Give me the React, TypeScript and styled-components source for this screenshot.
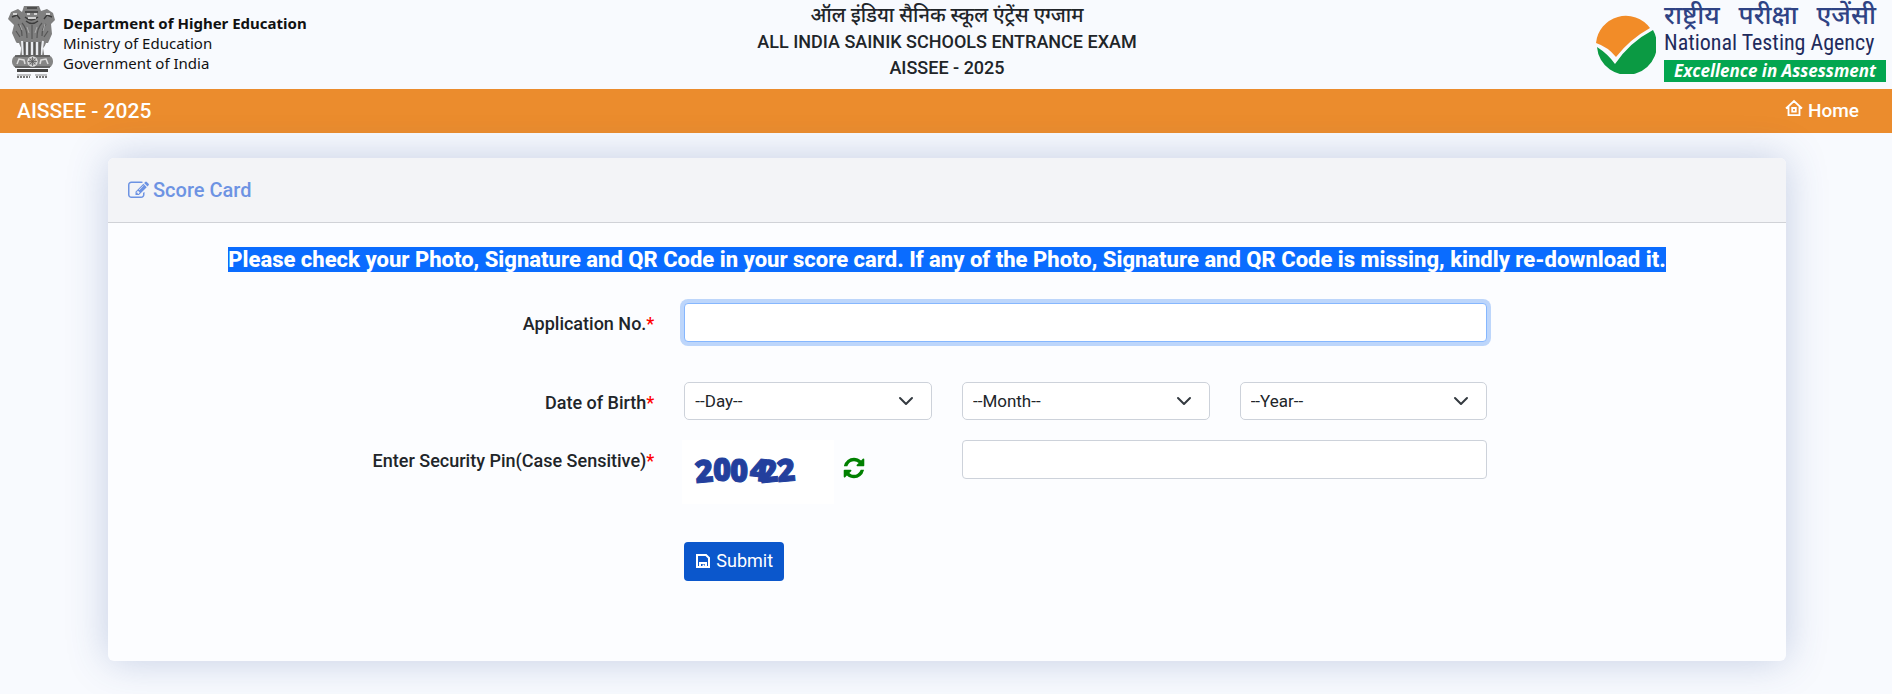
import React from "react";
import styled, { createGlobalStyle } from "styled-components";

const GlobalStyle = createGlobalStyle`
  *, *::before, *::after { box-sizing: border-box; }
  body {
    margin: 0;
    background: #f8fafe;
    color: #212529;
    font-family: Roboto, "Noto Sans Devanagari", "Liberation Sans", sans-serif;
    font-size: 16px;
    line-height: 24px;
  }
`;

const Header = styled.header`
  display: grid;
  grid-template-columns: 1fr auto 1fr;
  align-items: start;
  height: 89px;
  padding: 0 6px 0 8px;
`;

const Department = styled.div`
  display: flex;
  gap: 7px;
  padding-top: 4px;
`;

const DepartmentText = styled.div`
  padding-top: 9px;
  color: #111;
  font-family: "Noto Sans", sans-serif;
  font-size: 15px;
  line-height: 20px;
`;

const DepartmentName = styled.div`
  font-weight: 700;
`;

const ExamTitle = styled.div`
  padding-top: 3px;
  text-align: center;
  font-size: 18px;
  font-weight: 500;
  line-height: 26px;
`;

const ExamHindi = styled.div`
  height: 26px;
  font-size: 20px;
  line-height: 24px;
`;

const AgencyLogo = styled.div`
  display: flex;
  justify-self: end;
  gap: 8px;
`;

const AgencyMark = styled.svg`
  margin-top: 14px;
`;

const AgencyText = styled.div`
  display: flex;
  flex-direction: column;
  width: 222px;
  white-space: nowrap;
`;

const AgencyHindi = styled.div`
  display: flex;
  justify-content: space-between;
  padding-right: 10px;
  color: #2f4384;
  font-size: 26px;
  font-weight: 500;
  line-height: 30px;
`;

const AgencyEnglish = styled.div`
  color: #1f2b5c;
  font-family: "Roboto Condensed", Lato, sans-serif;
  font-size: 22px;
  font-weight: 400;
  line-height: 26px;
`;

const AgencyMotto = styled.div`
  margin-top: 4px;
  background: #03a650;
  color: #fff;
  font-family: "Open Sans", sans-serif;
  font-size: 17px;
  font-style: italic;
  font-weight: 700;
  line-height: 22px;
  text-align: center;
`;

const NavBar = styled.nav`
  display: flex;
  justify-content: space-between;
  align-items: center;
  height: 44px;
  padding: 0 33px 0 17px;
  background: #eb8c2d;
  color: #fff;
  font-weight: 500;
`;

const NavTitle = styled.span`
  font-size: 21px;
`;

const HomeLink = styled.a`
  display: flex;
  gap: 5px;
  color: inherit;
  font-size: 19px;
  text-decoration: none;
`;

const Card = styled.main`
  margin: 25px 106px 33px 108px;
  min-height: 503px;
  border-radius: 6px;
  background: #fcfdff;
  box-shadow: 0 0 40px rgba(51, 80, 150, 0.26);
`;

const CardHeader = styled.div`
  display: flex;
  align-items: center;
  gap: 4px;
  height: 65px;
  padding: 0 20px;
  border-bottom: 1px solid #d0d2d7;
  border-radius: 6px 6px 0 0;
  background: #f3f4f7;
  color: #6d93e3;
`;

const CardTitle = styled.h1`
  margin: 0;
  font-size: 20px;
  font-weight: 500;
`;

const Notice = styled.p`
  margin: 0;
  padding: 23px 20px 0;
  text-align: center;
  font-size: 22px;
  font-weight: 800;
  line-height: 27px;
`;

const Selected = styled.span`
  background: #0a6cff;
  color: #fff;
`;

const Form = styled.form`
  padding: 0 6px;
`;

const Row = styled.div<{ $top: number }>`
  display: grid;
  grid-template-columns: repeat(12, 1fr);
  align-items: start;
  margin-top: ${(p) => p.$top}px;
`;

const Cell = styled.div<{ $span: number; $start?: number }>`
  display: flex;
  grid-column: ${(p) => (p.$start ? `${p.$start} / ` : "")}span ${(p) => p.$span};
  padding: 0 15px;
`;

const Label = styled.label`
  flex: 1;
  padding-top: 9px;
  text-align: right;
  font-size: 18px;
  font-weight: 500;
`;

const Required = styled.span`
  color: #f00;
`;

const TextInput = styled.input`
  width: 100%;
  height: 39px;
  padding: 6px 12px;
  border: 1px solid #cdd2da;
  border-radius: 4px;
  background: #fff;
  font: inherit;

  &:focus {
    border-color: #86b7fe;
    outline: 0;
    box-shadow: 0 0 0 4px #bdd6fb;
  }
`;

const SelectBox = styled.div`
  display: grid;
  width: 100%;
  align-items: center;

  & > * { grid-area: 1 / 1; }
  & > svg { justify-self: end; margin-right: 18px; pointer-events: none; }
`;

const Select = styled.select`
  width: 100%;
  height: 38px;
  padding: 0 36px 0 10px;
  border: 1px solid #cdd2da;
  border-radius: 5px;
  appearance: none;
  background: #fff;
  color: #212529;
  font: inherit;
  font-size: 17px;
`;

const Captcha = styled.svg`
  margin-left: -2px;
  background: #fff;
`;

const RefreshButton = styled.button`
  align-self: start;
  margin: 16px 0 0 8px;
  padding: 0;
  border: 0;
  background: none;
  color: #008000;
  line-height: 0;
`;

const SubmitButton = styled.button`
  display: flex;
  align-items: center;
  gap: 5px;
  height: 39px;
  padding: 0 11px 1px;
  border: 0;
  border-radius: 4px;
  background: #0b57cc;
  color: #fff;
  font: inherit;
  font-size: 18px;
`;

function Emblem() {
  return (
    <svg width="48" height="76" viewBox="0 0 48 76" role="img" aria-label="State Emblem of India">
      <path d="M16 2h15l2 5 6-2 6 4 2 7-4 4 1 10-4 9-5 5 2 12H11l2-12-5-6-4-9 2-8-6-6 3-7 7-3 4 3z" fill="#808080" />
      <path d="M6 39l5 0 2 5-1 8H6zM43 39l-5 0-2 5 1 8h6z" fill="#f8fafe" />
      <path d="M14 37l1 15M19 38v14M24 38v14M29 38v14M35 37l-2 15" stroke="#e9ebef" strokeWidth="2" fill="none" />
      <path d="M16.500 38v13M21.500 38v14M26.500 38v14M32 38v13" stroke="#555" strokeWidth="1.500" fill="none" />
      <path d="M17 8h13M17 13q6 6 13 0M19 4h10M4 13l5-2 3 4M44 13l-5-2-3 4M18 17q6 5 12 0" stroke="#3c3c3c" strokeWidth="1.400" fill="none" />
      <path d="M19 10h3M26 10h3M20 14h8M5 10h4M38 10h4" stroke="#eee" strokeWidth="1.300" />
      <path d="M10 20q4 4 4 12M14 19q5 5 5 15M24 21v14M34 19q-5 5-5 15M38 20q-4 4-4 12M8 27l4 6M40 27l-4 6" stroke="#555" strokeWidth="1.200" fill="none" />
      <path d="M12 21l2 5M19 23l2 6M29 23l-2 6M37 20l-2 7" stroke="#aaa" />
      <rect x="4" y="51" width="41" height="13" rx="6" fill="#858585" />
      <path d="M7 52h35M7 63h35" stroke="#555" strokeWidth="1.500" />
      <circle cx="24.500" cy="57.500" r="4.500" fill="#aaa" stroke="#ddd" strokeWidth="1.500" />
      <path d="M24.500 53v9M20 57.500h9M21.500 54.500l6 6M27.500 54.500l-6 6" stroke="#555" strokeWidth=".7" />
      <path d="M9 60l2-5 5 1 1 4M32 60l1-4 5-1 2 5" stroke="#ddd" strokeWidth="1.500" fill="none" />
      <path d="M9 66.500h31" stroke="#444" strokeWidth="3" />
      <path d="M9 71h14M27 71h12" stroke="#888" />
      <path d="M9 73h13M28 73h11" stroke="#777" strokeWidth="2" strokeDasharray="2 1" />
    </svg>
  );
}

function Chevron() {
  return (
    <svg width="16" height="16" viewBox="0 0 16 16" fill="none" stroke="#343a40" strokeWidth="2" strokeLinecap="round" strokeLinejoin="round">
      <path d="m2 5 6 6 6-6" />
    </svg>
  );
}

function DateSelect({ name }: { name: string }) {
  return (
    <SelectBox>
      <Select id={name.toLowerCase()} aria-label={name}>
        <option>{`--${name}--`}</option>
      </Select>
      <Chevron />
    </SelectBox>
  );
}

export default function App() {
  return (
    <>
      <GlobalStyle />
      <Header>
        <Department>
          <Emblem />
          <DepartmentText>
            <DepartmentName>Department of Higher Education</DepartmentName>
            <div>Ministry of Education</div>
            <div>Government of India</div>
          </DepartmentText>
        </Department>
        <ExamTitle>
          <ExamHindi lang="hi">ऑल इंडिया सैनिक स्कूल एंट्रेंस एग्जाम</ExamHindi>
          <div>ALL INDIA SAINIK SCHOOLS ENTRANCE EXAM</div>
          <div>AISSEE - 2025</div>
        </ExamTitle>
        <AgencyLogo>
          <AgencyMark width="60" height="60" viewBox="0 0 60 60" aria-hidden="true">
            <path d="M0 29a30 30 0 0 1 54-15Q34 25 20 43Q12 33 0 29z" fill="#f28c28" />
            <path d="M1 33q11 7 18 17Q34 28 57 16A30 30 0 1 1 1 33z" fill="#0b9a43" />
          </AgencyMark>
          <AgencyText>
            <AgencyHindi lang="hi">
              <span>राष्ट्रीय</span> <span>परीक्षा</span> <span>एजेंसी</span>
            </AgencyHindi>
            <AgencyEnglish>National Testing Agency</AgencyEnglish>
            <AgencyMotto>Excellence in Assessment</AgencyMotto>
          </AgencyText>
        </AgencyLogo>
      </Header>
      <NavBar>
        <NavTitle>AISSEE - 2025</NavTitle>
        <HomeLink href="#">
          <svg width="18" height="18" viewBox="0 0 18 18" fill="none" stroke="currentColor" strokeWidth="1.800" aria-hidden="true">
            <path d="M1 9.500 9 2l8 7.500M3.500 8v8.200h11V8M7.200 9h3.600v3.600H7.200z" />
          </svg>
          Home
        </HomeLink>
      </NavBar>
      <Card>
        <CardHeader>
          <svg width="21" height="21" viewBox="0 0 1792 1792" fill="currentColor" aria-hidden="true">
            <path d="M888 1184l116-116-152-152-116 116v56h96v96h56zm440-720q-16-16-33 1l-350 350q-17 17-1 33t33-1l350-350q17-17 1-33zm80 594v190q0 119-84.500 203.500t-203.500 84.500h-832q-119 0-203.500-84.500t-84.500-203.500v-832q0-119 84.500-203.500t203.500-84.500h832q63 0 117 25 15 7 18 23 3 17-9 29l-49 49q-14 14-32 8-23-6-45-6h-832q-66 0-113 47t-47 113v832q0 66 47 113t113 47h832q66 0 113-47t47-113v-126q0-13 9-22l64-64q15-15 35-7t20 29zm-96-738l288 288-672 672h-288v-288zm444 132l-92 92-288-288 92-92q28-28 68-28t68 28l152 152q28 28 28 68t-28 68z" />
          </svg>
          <CardTitle>Score Card</CardTitle>
        </CardHeader>
        <Notice>
          <Selected>
            Please check your Photo, Signature and QR Code in your score card. If any of the Photo, Signature and QR Code is missing, kindly re-download it.
          </Selected>
        </Notice>
        <Form onSubmit={(e) => e.preventDefault()}>
          <Row $top={30}>
            <Cell $span={4}>
              <Label htmlFor="application">Application No.<Required>*</Required></Label>
            </Cell>
            <Cell $span={6}>
              <TextInput id="application" type="text" autoFocus />
            </Cell>
          </Row>
          <Row $top={40}>
            <Cell $span={4}>
              <Label htmlFor="day">Date of Birth<Required>*</Required></Label>
            </Cell>
            <Cell $span={2}><DateSelect name="Day" /></Cell>
            <Cell $span={2}><DateSelect name="Month" /></Cell>
            <Cell $span={2}><DateSelect name="Year" /></Cell>
          </Row>
          <Row $top={20}>
            <Cell $span={4}>
              <Label htmlFor="pin">Enter Security Pin(Case Sensitive)<Required>*</Required></Label>
            </Cell>
            <Cell $span={2}>
              <Captcha width="152" height="64" viewBox="0 0 152 64" role="img" aria-label="Security pin">
                <text x="14 31 48 67 79 96" y="43 41 42 40 43 42" rotate="-5 0 0 6 -6 -5" fill="#233f9d" stroke="#233f9d" strokeWidth="1" fontFamily="Open Sans" fontSize="31" fontWeight="800">200422</text>
              </Captcha>
              <RefreshButton type="button" aria-label="Refresh security pin">
                <svg width="24" height="24" viewBox="0 0 1792 1792" fill="currentColor">
                  <path d="M1639 1056q0 5-1 7-64 268-268 434.500t-478 166.500q-146 0-282.500-55t-243.500-157l-129 129q-19 19-45 19t-45-19-19-45v-448q0-26 19-45t45-19h448q26 0 45 19t19 45-19 45l-137 137q71 66 161 102t187 36q134 0 250-65t186-179q11-17 53-117 8-23 30-23h192q13 0 22.500 9.500t9.500 22.500zm25-800v448q0 26-19 45t-45 19h-448q-26 0-45-19t-19-45 19-45l138-138q-148-137-349-137-134 0-250 65t-186 179q-11 17-53 117-8 23-30 23h-199q-13 0-22.500-9.500t-9.500-22.500v-7q65-268 270-434.500t480-166.500q146 0 284 55.500t245 156.500l130-129q19-19 45-19t45 19 19 45z" />
                </svg>
              </RefreshButton>
            </Cell>
            <Cell $span={4}>
              <TextInput id="pin" type="text" />
            </Cell>
          </Row>
          <Row $top={38}>
            <Cell $span={4} $start={5}>
              <SubmitButton type="submit">
                <svg width="16" height="16" viewBox="0 0 16 16" fill="none" stroke="currentColor" strokeWidth="2" aria-hidden="true">
                  <path d="M2 2h9l3 3v9H2zM5 14v-4h6v4M8.500 11.500v3" />
                </svg>
                Submit
              </SubmitButton>
            </Cell>
          </Row>
        </Form>
      </Card>
    </>
  );
}
